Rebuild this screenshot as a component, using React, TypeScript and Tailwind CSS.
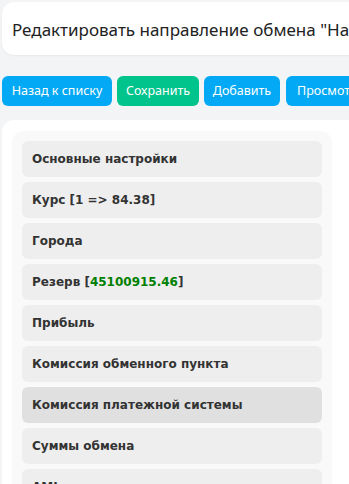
const items = [
  { label: 'Основные настройки' },
  { label: 'Курс [1 => 84.38]' },
  { label: 'Города' },
  { label: 'Резерв', reserve: '45100915.46' },
  { label: 'Прибыль' },
  { label: 'Комиссия обменного пункта' },
  { label: 'Комиссия платежной системы', active: true },
  { label: 'Суммы обмена' },
  { label: 'AML' },
];

export default function App() {
  return (
    <div className="h-screen w-full overflow-hidden bg-[#f3f4f6] font-['Noto_Sans',sans-serif]">
      <div className="w-[900px] pl-[2px] pt-[2px]">
        {/* заголовок */}
        <div className="flex h-[53px] items-center rounded-xl bg-white pl-[10px] pt-[3px] shadow-[0_1px_2px_rgba(0,0,0,0.05)]">
          <h1 className="whitespace-nowrap text-[17px] font-normal text-[#222]">
            Редактировать направление обмена "Наличные RUB → Tether TRC20 USDT"
          </h1>
        </div>

        {/* кнопки */}
        <div className="mt-[21px] flex gap-[5px] text-[12.5px] text-white">
          <button className="h-[30px] w-[110px] rounded-md bg-[#03a9f4]">Назад к списку</button>
          <button className="h-[30px] w-[82px] rounded-md bg-[#00c48c]">Сохранить</button>
          <button className="h-[30px] w-[76px] rounded-md bg-[#03a9f4]">Добавить</button>
          <button className="ml-[1px] h-[30px] w-[100px] rounded-md bg-[#03a9f4] pl-[11px] text-left">
            Просмотр
          </button>
        </div>

        {/* вкладки */}
        <div className="mt-[14px] rounded-xl bg-white pl-[10px] pt-[11px]">
          <div className="w-[320px] rounded-xl bg-[#f9f9f9] px-[10px] pt-[10px]">
            <div className="flex flex-col gap-[5px] font-['DejaVu_Sans',sans-serif] text-[12px] font-bold text-[#333]">
              {items.map((it) => (
                <div
                  key={it.label}
                  className={
                    it.active
                      ? 'flex h-[36px] items-center rounded-md bg-[#e0e0e0] px-[10px]'
                      : 'flex h-[36px] items-center rounded-md bg-[#eeeeee] px-[10px]'
                  }
                >
                  {it.reserve ? (
                    <span>
                      {it.label} [<span className="text-[#008000]">{it.reserve}</span>]
                    </span>
                  ) : (
                    it.label
                  )}
                </div>
              ))}
            </div>
          </div>
        </div>
      </div>
    </div>
  );
}
